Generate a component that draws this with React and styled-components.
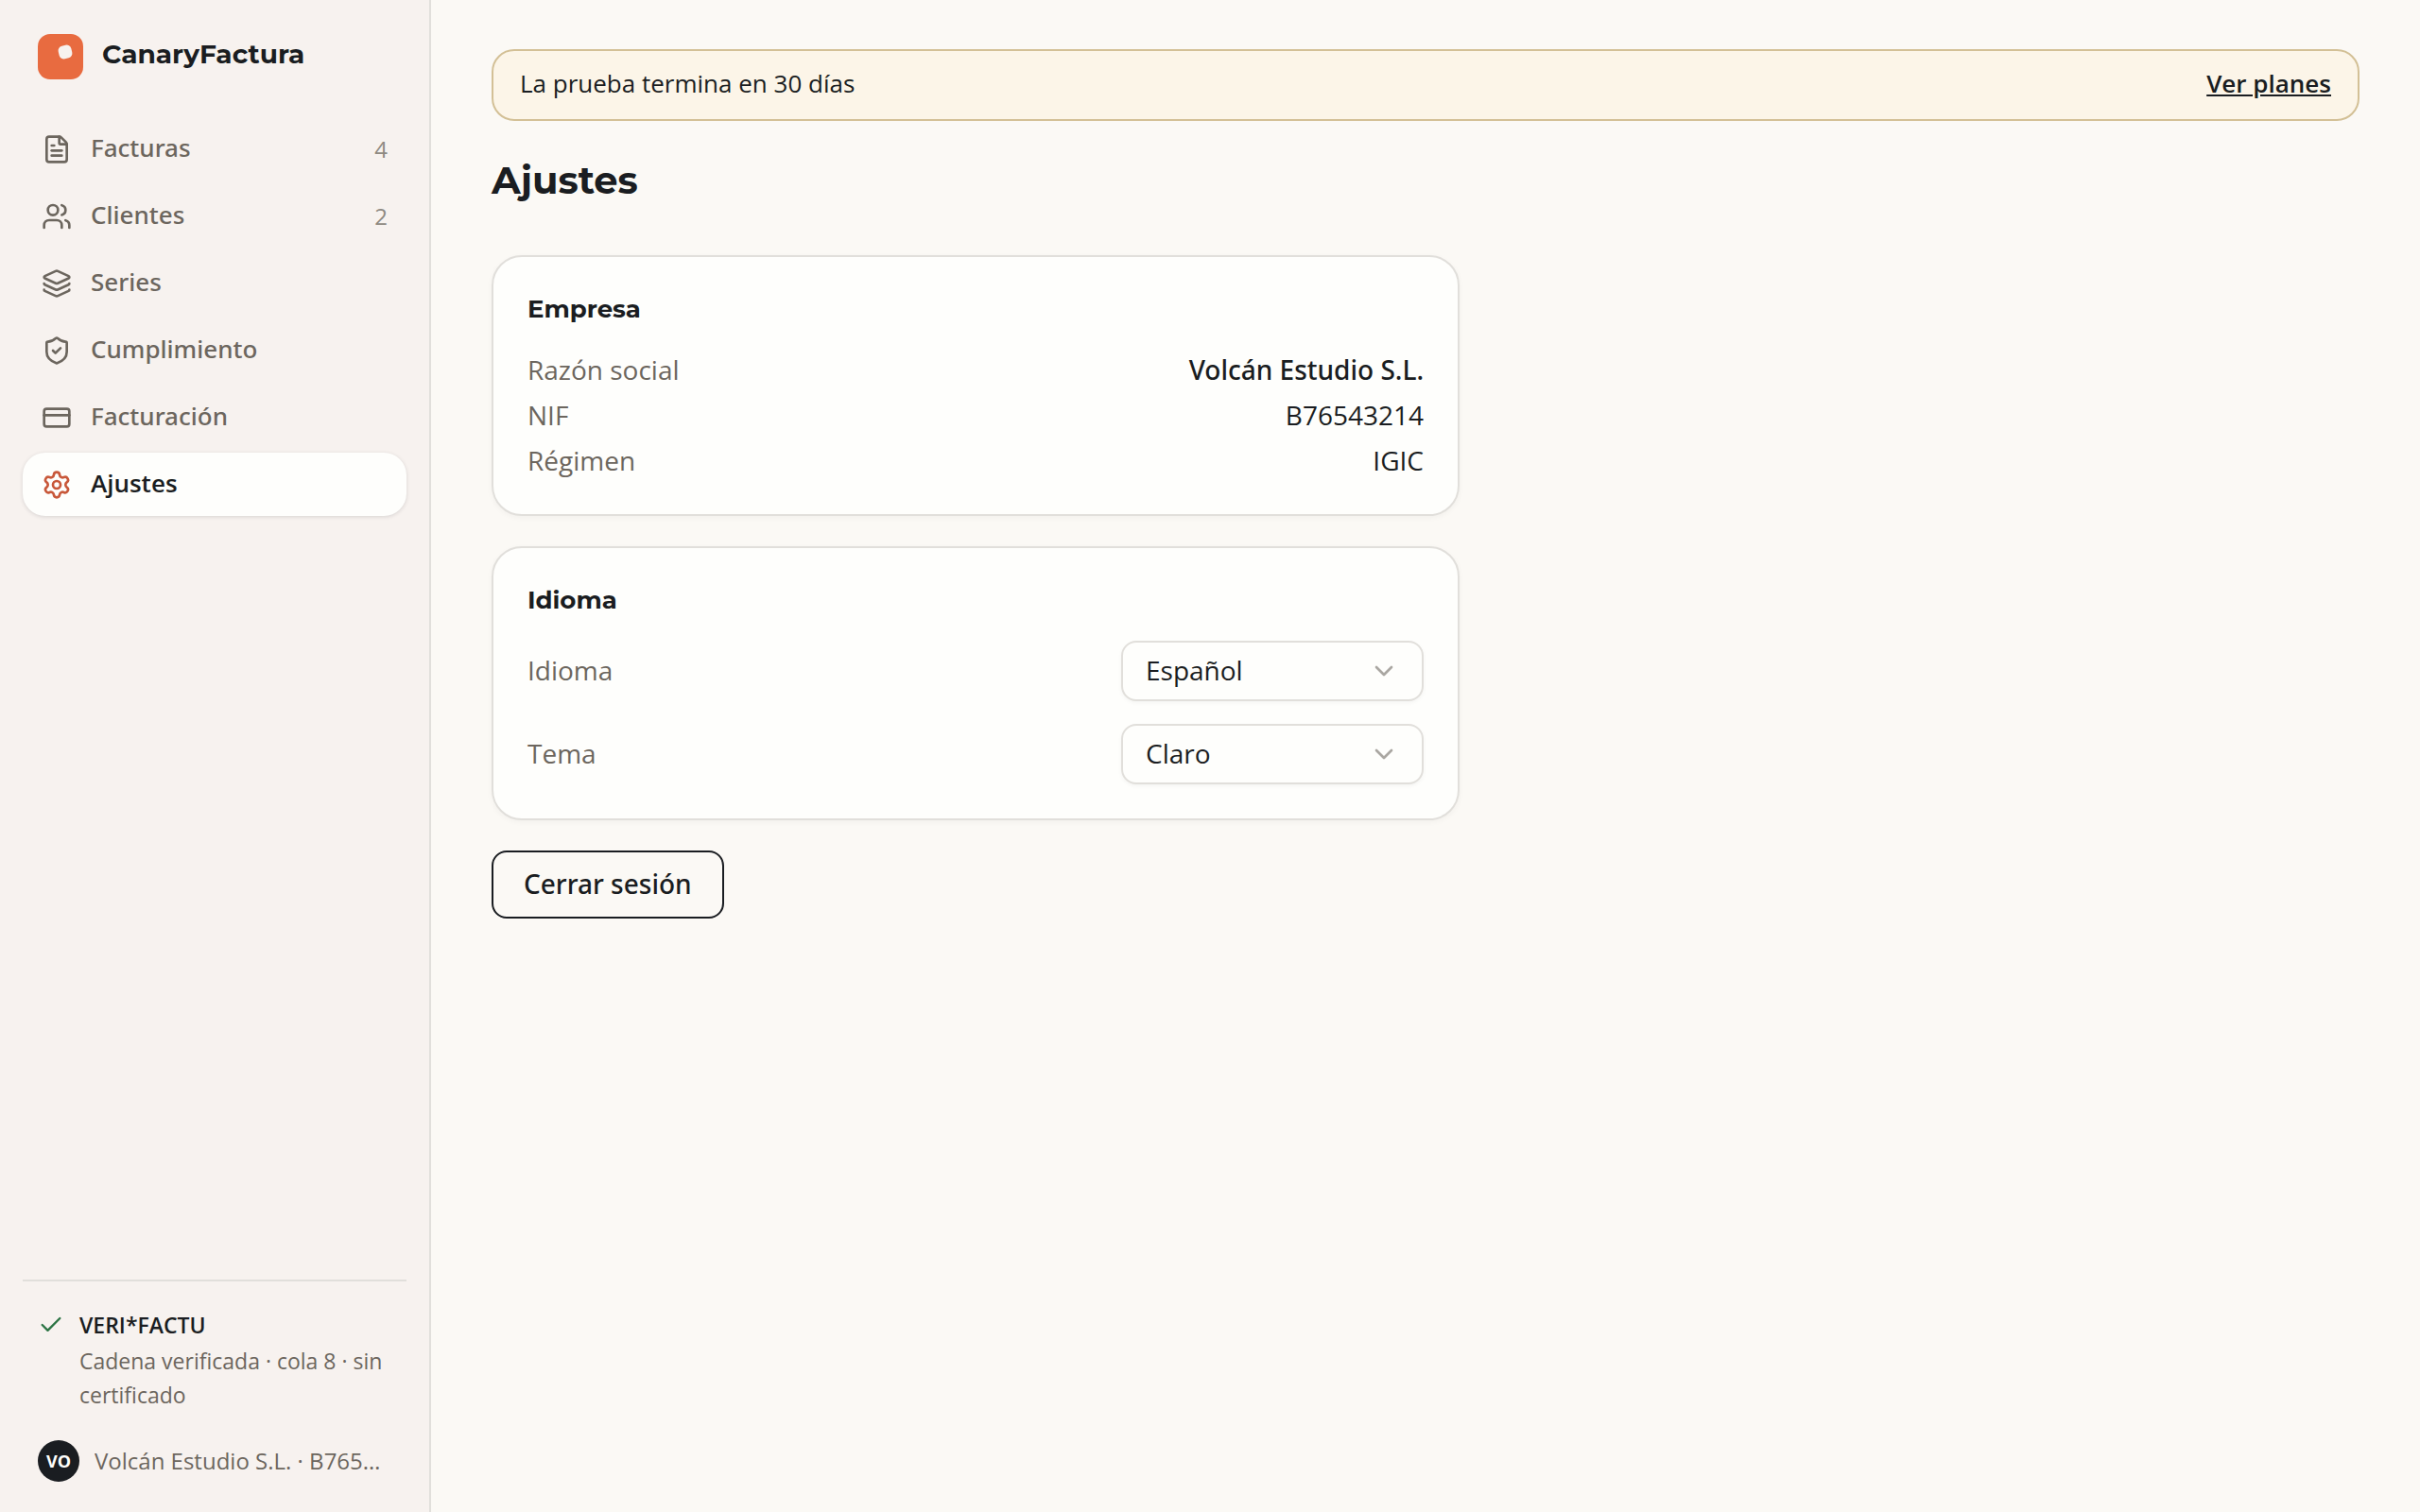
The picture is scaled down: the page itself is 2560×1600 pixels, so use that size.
import React, { useState } from 'react';
import styled, { createGlobalStyle, css } from 'styled-components';
import {
  FileText,
  Users,
  Layers,
  ShieldCheck,
  CreditCard,
  Settings,
  Check,
  ChevronDown,
} from 'lucide-react';

const color = {
  ink: '#1a1d21',
  muted: '#6c665e',
  faint: '#8f8a82',
  line: '#e1dfdb',
  canvas: '#fbf9f5',
  sidebar: '#f7f2ef',
  surface: '#fefefc',
  brand: '#e86b40',
  brandDeep: '#c8583a',
  success: '#2c7444',
};

const bodyFont = '"Open Sans", "Noto Sans", sans-serif';
const mediumFont = '"Noto Sans", "Open Sans", sans-serif';
const displayFont = 'Montserrat, Inter, sans-serif';

const medium = css`
  font-family: ${mediumFont};
  font-weight: 500;
`;

const GlobalStyle = createGlobalStyle`
  *, *::before, *::after { box-sizing: border-box; }
  body {
    margin: 0;
    background: ${color.canvas};
    color: ${color.ink};
    font-family: ${bodyFont};
    font-size: 28px;
    line-height: 42px;
  }
  h1, h2, p, dl, dd, ul { margin: 0; padding: 0; }
  button, select { font: inherit; color: inherit; }
`;

const Shell = styled.div`
  display: grid;
  grid-template-columns: 456px minmax(0, 1fr);
  min-height: 100vh;
`;

const Sidebar = styled.aside`
  display: flex;
  flex-direction: column;
  padding: 36px 24px 32px;
  background: ${color.sidebar};
  border-right: 2px solid ${color.line};
`;

const Brand = styled.a`
  display: flex;
  align-items: flex-start;
  gap: 20px;
  padding: 0 16px;
  margin-bottom: 40px;
  color: ${color.ink};
  text-decoration: none;
`;

const BrandName = styled.span`
  font-family: ${displayFont};
  font-size: 28px;
  font-weight: 700;
  line-height: 42px;
`;

const NavList = styled.ul`
  display: flex;
  flex-direction: column;
  gap: 4px;
  list-style: none;
`;

const NavLink = styled.a`
  display: flex;
  align-items: center;
  gap: 20px;
  height: 67px;
  padding: 0 20px;
  border-radius: 24px;
  color: ${color.muted};
  font-size: 26px;
  line-height: 36px;
  text-decoration: none;
  ${medium}

  ${({ $active }) =>
    $active &&
    css`
      background: ${color.surface};
      color: ${color.ink};
      font-family: ${bodyFont};
      font-weight: 600;
      box-shadow: 0 1px 4px rgba(26, 29, 33, 0.14);

      svg {
        color: ${color.brandDeep};
      }
    `}
`;

const NavLabel = styled.span`
  flex: 1;
  padding-bottom: 3px;
`;

const NavCount = styled.span`
  color: ${color.faint};
  font-family: ${bodyFont};
  font-size: 24px;
  font-weight: 400;
`;

const SidebarFooter = styled.footer`
  display: flex;
  flex-direction: column;
  gap: 30px;
  margin-top: auto;
  padding: 28px 16px 0;
  border-top: 2px solid ${color.line};
  color: ${color.muted};
  line-height: 36px;
`;

const Status = styled.div`
  display: flex;
  align-items: flex-start;
  gap: 16px;
  font-size: 23px;

  svg {
    flex: none;
    margin-top: 4px;
    color: ${color.success};
  }
`;

const StatusText = styled.div`
  display: flex;
  flex-direction: column;
  gap: 2px;
`;

const StatusTitle = styled.strong`
  color: ${color.ink};
  font-weight: 600;
`;

const Account = styled.div`
  display: flex;
  align-items: center;
  gap: 16px;
  font-size: 24px;
`;

const Avatar = styled.span`
  display: grid;
  flex: none;
  place-items: center;
  width: 44px;
  height: 44px;
  border-radius: 50%;
  background: ${color.ink};
  color: ${color.surface};
  font-size: 18px;
  font-weight: 700;
`;

const AccountName = styled.span`
  overflow: hidden;
  text-overflow: ellipsis;
  white-space: nowrap;
`;

const Main = styled.main`
  display: flex;
  flex-direction: column;
  padding: 52px 64px;
`;

const TrialBanner = styled.div`
  display: flex;
  align-items: center;
  justify-content: space-between;
  padding: 16px 28px 20px;
  border: 2px solid #d3c096;
  border-radius: 24px;
  background: #fcf5e8;
  font-size: 26px;
  line-height: 36px;
`;

const PlansLink = styled.a`
  color: ${color.ink};
  font-weight: 600;
`;

const PageTitle = styled.h1`
  margin: 32px 0 48px;
  font-family: ${displayFont};
  font-size: 40px;
  font-weight: 700;
  line-height: 62px;
`;

const Sections = styled.div`
  display: flex;
  flex-direction: column;
  align-items: flex-start;
  gap: 32px;
  width: 100%;
  max-width: 1024px;
`;

const Card = styled.section`
  width: 100%;
  padding: 36px;
  border: 2px solid ${color.line};
  border-radius: 32px;
  background: ${color.surface};
  box-shadow: 0 2px 6px rgba(26, 29, 33, 0.04);
`;

const CardTitle = styled.h2`
  margin-bottom: 24px;
  font-family: ${displayFont};
  font-size: 26px;
  font-weight: 700;
  line-height: 38px;
`;

const Details = styled.dl`
  display: flex;
  flex-direction: column;
  gap: 6px;
`;

const Row = styled.div`
  display: flex;
  align-items: center;
  justify-content: space-between;
`;

const Term = styled.dt`
  color: ${color.muted};
`;

const Value = styled.dd`
  ${({ $strong }) => $strong && medium}
`;

const Fields = styled.div`
  display: flex;
  flex-direction: column;
  gap: 24px;
`;

const FieldLabel = styled.label`
  padding-bottom: 2px;
  color: ${color.muted};
`;

const SelectBox = styled.div`
  position: relative;
  width: 320px;

  svg {
    position: absolute;
    top: 16px;
    right: 26px;
    color: #aaa7a2;
    pointer-events: none;
  }
`;

const SelectControl = styled.select`
  display: block;
  width: 100%;
  height: 64px;
  padding: 0 64px 2px 24px;
  border: 2px solid ${color.line};
  border-radius: 16px;
  background: ${color.surface};
  box-shadow: 0 2px 4px rgba(26, 29, 33, 0.04);
  appearance: none;
`;

const SignOutButton = styled.button`
  height: 72px;
  padding: 0 32px 2px;
  border: 2px solid ${color.ink};
  border-radius: 16px;
  background: transparent;
  cursor: pointer;
  ${medium}
`;

const LogoMark = () => (
  <svg width="48" height="48" viewBox="0 0 48 48" aria-hidden="true">
    <rect width="48" height="48" rx="13" fill={color.brand} />
    <rect
      x="22"
      y="12"
      width="14"
      height="14"
      rx="5"
      fill={color.sidebar}
      transform="rotate(-14 29 19)"
    />
  </svg>
);

const navItems = [
  { label: 'Facturas', icon: FileText, count: 4 },
  { label: 'Clientes', icon: Users, count: 2 },
  { label: 'Series', icon: Layers },
  { label: 'Cumplimiento', icon: ShieldCheck },
  { label: 'Facturación', icon: CreditCard },
  { label: 'Ajustes', icon: Settings, active: true },
];

const company = [
  { term: 'Razón social', value: 'Volcán Estudio S.L.', strong: true },
  { term: 'NIF', value: 'B76543214' },
  { term: 'Régimen', value: 'IGIC' },
];

function SelectField({ id, label, options }) {
  const [value, setValue] = useState(options[0]);
  return (
    <Row>
      <FieldLabel htmlFor={id}>{label}</FieldLabel>
      <SelectBox>
        <SelectControl id={id} value={value} onChange={(e) => setValue(e.target.value)}>
          {options.map((option) => (
            <option key={option}>{option}</option>
          ))}
        </SelectControl>
        <ChevronDown size={32} strokeWidth={2} aria-hidden="true" />
      </SelectBox>
    </Row>
  );
}

export default function App() {
  return (
    <>
      <GlobalStyle />
      <Shell>
        <Sidebar>
          <Brand href="#">
            <LogoMark />
            <BrandName>CanaryFactura</BrandName>
          </Brand>
          <nav>
            <NavList>
              {navItems.map(({ label, icon: Icon, count, active }) => (
                <li key={label}>
                  <NavLink href="#" $active={active} aria-current={active ? 'page' : undefined}>
                    <Icon size={32} strokeWidth={2} aria-hidden="true" />
                    <NavLabel>{label}</NavLabel>
                    {count && <NavCount>{count}</NavCount>}
                  </NavLink>
                </li>
              ))}
            </NavList>
          </nav>
          <SidebarFooter>
            <Status>
              <Check size={28} strokeWidth={2} aria-hidden="true" />
              <StatusText>
                <StatusTitle>VERI*FACTU</StatusTitle>
                <p>Cadena verificada · cola 8 · sin certificado</p>
              </StatusText>
            </Status>
            <Account>
              <Avatar>VO</Avatar>
              <AccountName>Volcán Estudio S.L. · B76543214</AccountName>
            </Account>
          </SidebarFooter>
        </Sidebar>
        <Main>
          <TrialBanner>
            <p>La prueba termina en 30 días</p>
            <PlansLink href="#">Ver planes</PlansLink>
          </TrialBanner>
          <PageTitle>Ajustes</PageTitle>
          <Sections>
            <Card>
              <CardTitle>Empresa</CardTitle>
              <Details>
                {company.map(({ term, value, strong }) => (
                  <Row key={term}>
                    <Term>{term}</Term>
                    <Value $strong={strong}>{value}</Value>
                  </Row>
                ))}
              </Details>
            </Card>
            <Card>
              <CardTitle>Idioma</CardTitle>
              <Fields>
                <SelectField id="language" label="Idioma" options={['Español', 'English']} />
                <SelectField id="theme" label="Tema" options={['Claro', 'Oscuro']} />
              </Fields>
            </Card>
            <SignOutButton type="button">Cerrar sesión</SignOutButton>
          </Sections>
        </Main>
      </Shell>
    </>
  );
}
